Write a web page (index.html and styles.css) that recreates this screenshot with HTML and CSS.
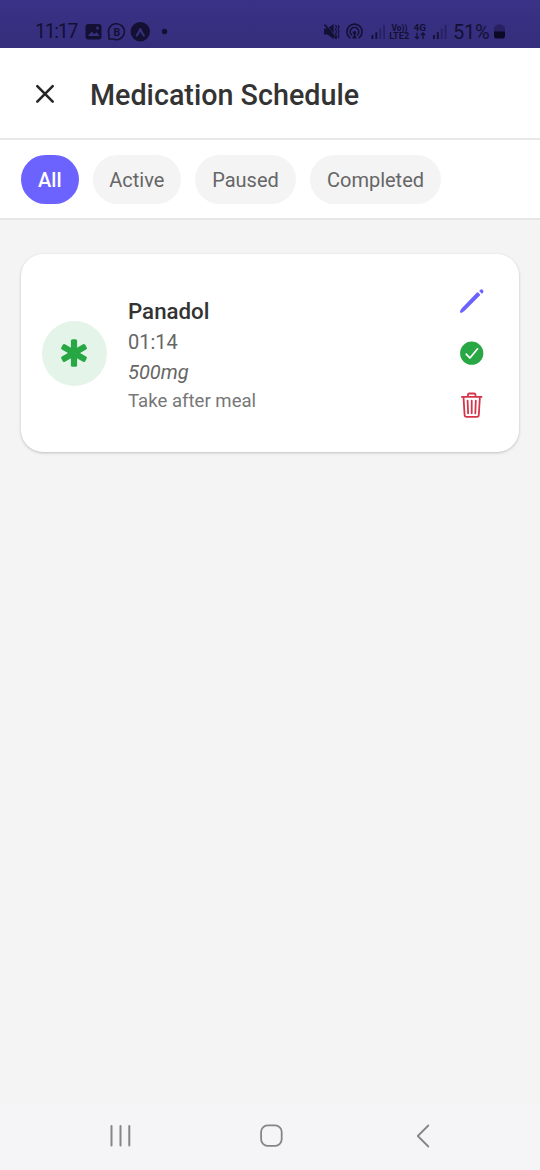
FILE: index.html
```html
<!DOCTYPE html>
<html lang="en">
<head>
<meta charset="utf-8">
<title>Medication Schedule</title>
<link rel="stylesheet" href="styles.css">
</head>
<body>
<div class="screen">
  <div class="status">
    <div class="status-left">
      <span class="clock">11:17</span>
      <svg class="notifications" width="86" height="22" viewBox="84 21 86 22">
        <rect x="85.5" y="24" width="16" height="15.5" rx="3" fill="#131033"/>
        <path d="M88 36l3.6-4.5 2.6 2.8 2.3-2 3.2 3.7z" fill="#35307c"/>
        <circle cx="97.5" cy="28" r="1.5" fill="#35307c"/>
        <path d="M109 38.9v-4.2a8 8 0 1 1 4 4.2z" fill="none" stroke="#131033" stroke-width="1.5" stroke-linejoin="round"/>
        <text x="113.4" y="35.5" class="badge-letter">B</text>
        <circle cx="140.3" cy="31.7" r="9.7" fill="#131033"/>
        <path d="M136.7 35.5q1.6-1.6 3.6-6.5 2 4.9 3.6 6.5" fill="none" stroke="#35307c" stroke-width="2" stroke-linecap="round" stroke-linejoin="round"/>
        <circle cx="164.5" cy="31.5" r="2.7" fill="#131033"/>
      </svg>
    </div>
    <div class="status-right">
      <svg class="network" width="126" height="22" viewBox="323 21 126 22">
        <path d="M324 28.500h3.400l6.300-4.600v15.300l-6.300-4.600H324z" fill="#131033"/>
        <path d="M326 24.500l11.500 14" stroke="#35307c" stroke-width="1"/>
        <path d="M324.500 24.500l12 14.300" stroke="#131033" stroke-width="1.700"/>
        <path d="M335.5 25l1 2-1 2.4 1 2.3-1 2.3 1 2.3-1 2M338 25l1 2-1 2.4 1 2.3-1 2.3 1 2.3-1 2" fill="none" stroke="#131033" stroke-width="1.1"/>
        <g fill="none" stroke="#131033" stroke-width="1.6" stroke-linecap="round">
          <path d="M349.8 37.7a7.6 7.6 0 1 1 9.4 0M351.4 34.8a4.3 4.3 0 1 1 6.2 0"/>
        </g>
        <circle cx="354.5" cy="32.8" r="1.800" fill="#131033"/><path d="M354.500 33l2.300 5.500h-4.600z" fill="#131033"/>
        <g fill="#131033">
          <rect x="371.5" y="35" width="1.8" height="4"/><rect x="375.4" y="32.2" width="1.8" height="6.8"/>
          <rect x="433" y="35" width="1.8" height="4"/><rect x="436.9" y="32.2" width="1.8" height="6.8"/>
        </g>
        <g fill="#272162">
          <rect x="379.3" y="28.5" width="1.8" height="10.5"/><rect x="383.2" y="24.8" width="1.8" height="14.2"/>
          <rect x="440.8" y="28.5" width="1.8" height="10.5"/><rect x="444.7" y="24.8" width="1.8" height="14.2"/>
        </g>
        <text x="391.5" y="30.8" textLength="16" lengthAdjust="spacingAndGlyphs" class="tiny">Vo))</text>
        <text x="389.2" y="39" textLength="20" lengthAdjust="spacingAndGlyphs" class="tiny">LTE2</text>
        <text x="413.5" y="31" textLength="12.5" lengthAdjust="spacingAndGlyphs" class="tiny">4G</text>
        <path d="M417 32.7v6M414.9 36.6l2.1 2.1 2.1-2.1M423 39v-6M420.9 35l2.1-2.1 2.1 2.1" fill="none" stroke="#131033" stroke-width="1.3"/>
      </svg>
      <span class="percent">51%</span>
      <svg class="battery" width="11" height="15" viewBox="0 0 11 15">
        <path d="M3 1.500V.5h5v1h.7Q11 1.500 11 4v4H0V4q0-2.500 2.300-2.500z" fill="#272162"/>
        <path d="M0 7.500h11V12q0 2.500-2.300 2.500H2.300Q0 14.500 0 12z" fill="#0c0924"/>
      </svg>
    </div>
  </div>

  <header class="header">
    <svg class="close" width="20" height="20" viewBox="0 0 20 20"><path d="M2.300 2.200l15.400 15.400M17.700 2.200L2.300 17.600" fill="none" stroke="#262626" stroke-width="2.600" stroke-linecap="round"/></svg>
    <h1 class="title">Medication Schedule</h1>
  </header>

  <nav class="tabs">
    <div class="tab tab-all">All</div>
    <div class="tab tab-active">Active</div>
    <div class="tab tab-paused">Paused</div>
    <div class="tab tab-completed">Completed</div>
  </nav>

  <main class="content">
    <article class="card">
      <div class="med-icon">
        <svg width="28" height="28" viewBox="-14 -14 28 28" fill="#28a745"><rect x="-3.100" y="-13.800" width="6.200" height="27.600" rx="1.600"/><rect x="-3.100" y="-13.800" width="6.200" height="27.600" rx="1.600" transform="rotate(60)"/><rect x="-3.100" y="-13.800" width="6.200" height="27.600" rx="1.600" transform="rotate(120)"/></svg>
      </div>
      <div class="info">
        <div class="name">Panadol</div>
        <div class="time">01:14</div>
        <div class="dose">500mg</div>
        <div class="note">Take after meal</div>
      </div>
      <div class="actions">
        <svg width="26" height="26" viewBox="0 0 26 26" fill="#6c63ff"><path d="M17.900 4.600q.7-.6 1.300 0l1.700 1.700q.5.600 0 1.200L5.400 23 3.200 24.600q-1.300.6-1.900 0-.6-.7 0-2l1.500-2.400z"/><path d="M20.200 3.100l1-1.200q1.300-1.100 2.600.1 1.300 1.400.2 2.700l-1.200 1z"/></svg>
        <svg width="26" height="26" viewBox="0 0 26 26"><circle cx="12.700" cy="13.200" r="11.600" fill="#28a745"/><path d="M7.200 14.100l3.700 3.900 7.700-9.200" fill="none" stroke="#fff" stroke-width="1.700" stroke-linecap="round" stroke-linejoin="round"/></svg>
        <svg width="26" height="26" viewBox="0 0 26 26" fill="none" stroke="#d5344a" stroke-width="1.800" stroke-linecap="round" stroke-linejoin="round"><path d="M2.900 4.900h19.600M4.500 4.900l1.100 18.100q.1 1.900 2 1.900h10.200q1.900 0 2-1.900L20.900 4.900M8.900 4.900V3q0-1.500 1.500-1.500h4.600q1.500 0 1.500 1.500v1.900M12.700 8.700v12.600M8.600 8.700l.5 12.600M16.800 8.700l-.5 12.600"/></svg>
      </div>
    </article>
  </main>

  <footer class="navbar">
    <svg width="24" height="24" viewBox="0 0 24 24" stroke="#858587" stroke-width="2" stroke-linecap="round"><path d="M3.500 2v19.500M12.500 2v19.500M21.300 2v19.500"/></svg>
    <svg width="24" height="24" viewBox="0 0 24 24" fill="none" stroke="#858587" stroke-width="1.800"><rect x="1.100" y="1.400" width="20.600" height="20.400" rx="6.500"/></svg>
    <svg width="24" height="24" viewBox="0 0 24 24" fill="none" stroke="#858587" stroke-width="1.800" stroke-linecap="round" stroke-linejoin="round"><path d="M17.300 1.500L6.800 12l10.500 10.500"/></svg>
  </footer>
</div>
</body>
</html>
```
FILE: styles.css
```css
* { box-sizing: border-box; }
body { margin: 0; font-family: Roboto, "Liberation Sans", sans-serif; background: #f4f4f4; }
svg { display: block; flex: none; }
.screen { width: 540px; height: 1170px; display: flex; flex-direction: column; }

.status { height: 48px; flex: none; display: flex; justify-content: space-between; padding: 21px 35px 0; background: linear-gradient(#393286, #352e7c); color: #131033; }
.status-left, .status-right { display: flex; height: 22px; }
.clock { width: 42px; font-size: 19.500px; line-height: 22px; letter-spacing: -1.300px; white-space: nowrap; }
.notifications { margin-left: 7px; }
.percent { width: 37px; margin-left: 4px; font-size: 20px; line-height: 22px; letter-spacing: -0.200px; white-space: nowrap; }
.battery { margin: 3px 0 0 4px; }
.badge-letter { font-size: 10.500px; font-weight: 700; fill: #131033; }
.tiny { font-size: 9px; font-weight: 700; fill: #131033; }

.header { height: 92px; flex: none; display: flex; align-items: center; padding: 1px 35px 0; background: #fff; border-bottom: 2px solid #e9e9e9; }
.title { margin: 2px 0 0 35px; font-size: 28.700px; line-height: 36px; font-weight: 500; color: #333; white-space: nowrap; }

.tabs { height: 80px; flex: none; display: flex; gap: 14px; padding: 14.500px 21px; background: #fff; border-bottom: 2px solid #e6e6e6; }
.tab { height: 49.500px; border-radius: 25px; background: #f4f4f4; color: #666; font-size: 20px; line-height: 51px; text-align: center; white-space: nowrap; }
.tab-all { width: 57.500px; background: #6c63ff; color: #fff; font-weight: 500; }
.tab-active { width: 88.500px; }
.tab-paused { width: 101px; }
.tab-completed { width: 131px; }

.content { flex: 1; padding: 34.300px 21px; }
.card { height: 198px; display: flex; align-items: center; padding: 0 34px 0 21px; background: #fff; border-radius: 22px; box-shadow: 0 1px 3px rgba(0,0,0,.22); }
.med-icon { width: 65px; height: 65px; border-radius: 50%; background: #e4f4e8; display: flex; align-items: center; justify-content: center; flex: none; padding-right: 1px; }
.info { margin-left: 21px; flex: 1; padding-top: 5px; white-space: nowrap; }
.name { font-size: 22.300px; font-weight: 500; line-height: 31px; color: #333; }
.time { font-size: 20px; line-height: 30px; color: #666; }
.dose { font-size: 20px; line-height: 30px; font-style: italic; color: #666; }
.note { font-size: 18.600px; line-height: 28px; color: #777; }
.actions { display: flex; flex-direction: column; gap: 26px; }

.navbar { height: 66px; flex: none; display: flex; justify-content: space-between; align-items: center; padding: 0 105px 2px 108px; background: #f5f5f8; }
```
